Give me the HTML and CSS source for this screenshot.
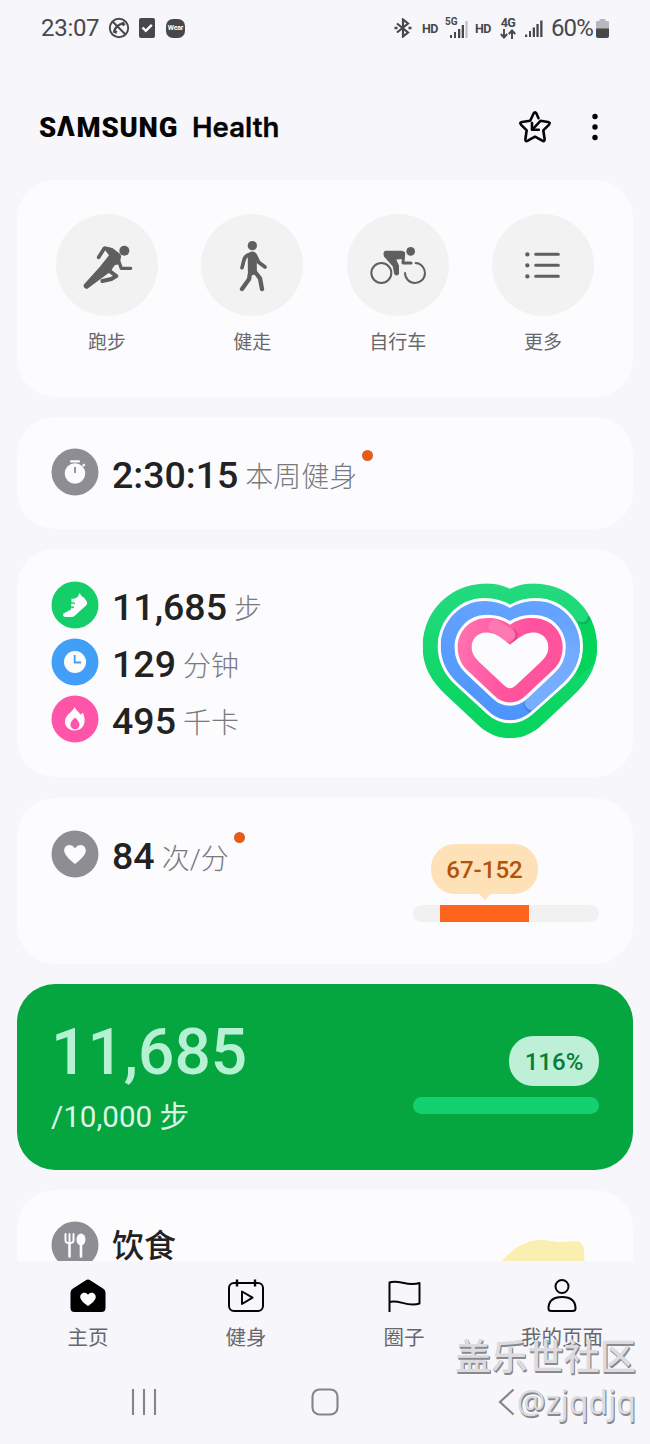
FILE: index.html
```html
<!DOCTYPE html>
<html lang="zh-CN">
<head>
<meta charset="utf-8">
<title>Samsung Health</title>
<link rel="stylesheet" href="styles.css">
</head>
<body>
<div class="screen">
  <div class="statusbar">
    <span class="clock">23:07</span>
    <svg class="st-call" width="22" height="22" viewBox="0 0 22 22" fill="none" stroke="#48484b" stroke-width="1.9"><circle cx="11" cy="11" r="9.2"/><path d="M4.500 4.500l13 13"/><path d="M6.300 15.500C6 11.500 10 7 15.500 6.300" stroke-width="2.300"/><path d="M14.300 5.300l2 3.200M5.500 13.800l3.300 1.800" stroke-width="3"/></svg>
    <svg class="st-check" width="16" height="20" viewBox="0 0 16 20"><rect width="16" height="20" rx="2" fill="#48484b"/><path d="M3.500 9.500l3.300 3.300 6-6" fill="none" stroke="#fff" stroke-width="2.400"/></svg>
    <span class="wear">Wear</span>
    <span class="grow"></span>
    <svg class="st-bt" width="18" height="20" viewBox="0 0 18 20" fill="none" stroke="#48484b" stroke-width="2.200"><path d="M3 5.500l11 9-5 4V1.500l5 4-11 9"/><path d="M.5 10h3M14.500 10h3" stroke-width="2.500"/></svg>
    <span class="hd hd-one">HD</span>
    <span class="cell cell-5g"><b class="gen">5G</b>
      <svg width="18" height="18" viewBox="0 0 18 18" fill="#48484b"><path d="M0 15h2v3H0zM4 12h2v6H4zM8 9h2.300v9H8zM11.700 5H14v13h-2.300z"/><path d="M15.500 1h2v17h-2z" fill="#bcbcc0"/></svg></span>
    <span class="hd hd-two">HD</span>
    <span class="gen4"><b>4G</b><svg width="16" height="10" viewBox="0 0 16 10" fill="none" stroke="#48484b" stroke-width="1.900"><path d="M4 0v8.500M.8 5L4 8.500 7.200 5M12 10V1.500M8.800 5L12 1.500 15.200 5"/></svg></span>
    <svg class="st-sig" width="18" height="18" viewBox="0 0 18 18" fill="#48484b"><path d="M0 15.500h2.200V18H0zM4 12h2v6H4zM7.700 8.500H10V18H7.700zM11.400 5h2.300v13h-2.300zM15.200 1.500h2.300V18h-2.300z"/></svg>
    <span class="pct">60%</span>
    <svg class="st-bat" width="13" height="19" viewBox="0 0 13 19"><path d="M3.500 0h6v2H12q1 0 1 1v7H0V3q0-1 1-1h2.500z" fill="#b9b9bd"/><path d="M0 9.500h13V17q0 2-2 2H2q-2 0-2-2z" fill="#48484b"/></svg>
  </div>

  <header class="header">
    <h1 class="brand"><span class="samsung">S<span class="open-a">A</span>MSUNG</span><span class="health">Health</span></h1>
    <svg class="star" width="34" height="34" viewBox="0 0 34 34" fill="none" stroke="#050505" stroke-width="2.600" stroke-linejoin="round" stroke-linecap="round"><path d="M20.500 8.200L18.400 3.500Q17 1 15.600 3.500L12.200 10.700 4 12Q1 12.500 3.200 14.800L8.700 20.300 7.400 29Q7.200 32 9.800 30.700L17 26.700 24.300 30.700Q26.800 32 26.600 29L25.300 20.300 30.800 14.800Q33 12.500 30 12L22.500 10.800 15 18.800"/><path d="M14 13v6.800h6.800"/></svg>
    <svg class="dots" width="8" height="28" viewBox="0 0 8 28"><circle cx="4" cy="3.500" r="2.700"/><circle cx="4" cy="14" r="2.700"/><circle cx="4" cy="24.500" r="2.700"/></svg>
  </header>

  <main class="cards">
    <section class="card quick">
      <div class="action"><span class="disc"><svg width="100" height="100" viewBox="0 0 300 300" fill="#5f5f61" stroke="#5f5f61" stroke-linecap="round" stroke-linejoin="round"><circle cx="202" cy="107" r="15" stroke="none"/><path d="M125 127L142 100 162 105" fill="none" stroke-width="11"/><path d="M143 94L166 99 189 116Q194 121 191 131L188 147 173 151 160 170 90 222Q78 219 80 209L128 156 156 121 146 108Z" stroke="none"/><path d="M185 138L193 160H221" fill="none" stroke-width="10"/><path d="M155 166L178 183 163 192 136 198" fill="none" stroke-width="12"/></svg></span><span class="label">跑步</span></div>
      <div class="action"><span class="disc"><svg width="100" height="100" viewBox="0 0 300 300" fill="none" stroke="#5f5f61" stroke-linecap="round" stroke-linejoin="round"><circle cx="151" cy="92" r="14" fill="#5f5f61" stroke="none"/><path d="M151 123V167" stroke-width="27"/><path d="M144 118Q128 121 125 139L120 158M160 121L170 142 189 156" stroke-width="11"/><path d="M145 170L141 193 120 222M157 168L174 190 180 222" stroke-width="13"/></svg></span><span class="label">健走</span></div>
      <div class="action"><span class="disc"><svg width="100" height="100" viewBox="0 0 300 300" fill="none" stroke="#5f5f61" stroke-linecap="round" stroke-linejoin="round"><circle cx="188" cy="109" r="13" fill="#5f5f61" stroke="none"/><circle cx="100" cy="174" r="30" stroke-width="6"/><path d="M203 144A30 30 0 1 1 171 174" stroke-width="6"/><path d="M167 115L165 144H189" stroke-width="9"/><path d="M113 109H160Q171 110 169 122L162 130 142 132 151 152V176Q147 182 141 177L136 153 110 124Q106 111 113 109Z" fill="#5f5f61" stroke-width="4"/></svg></span><span class="label">自行车</span></div>
      <div class="action"><span class="disc"><svg width="100" height="100" viewBox="0 0 300 300" fill="none" stroke="#5f5f61" stroke-linecap="round" stroke-width="9"><path d="M128 118H196M128 151H196M128 184H196"/><path d="M103 118h.1M103 151h.1M103 184h.1" stroke-width="13"/></svg></span><span class="label">更多</span></div>
    </section>

    <section class="card week">
      <div class="metric"><svg class="badge" width="48" height="48" viewBox="0 0 48 48"><circle cx="24" cy="24" r="23.500" fill="#8e8d93"/><g fill="#fcfcff"><circle cx="24" cy="25.500" r="10.300"/><rect x="19" y="12.200" width="10" height="2.300" rx="1"/><path d="M31 17l2-1.600 1.500 1.800-2 1.500z"/></g><path d="M24 19v6" stroke="#77767b" stroke-width="1.500"/></svg><strong>2:30:15</strong><span class="unit">本周健身</span><i class="dot"></i></div>
    </section>

    <section class="card activity">
      <div class="metrics">
        <div class="metric"><svg class="badge" width="48" height="48" viewBox="0 0 48 48"><circle cx="24" cy="24" r="23.500" fill="#13ce69"/><path d="M28.500 12Q31 16 33 16.500L36 21Q36.500 23 35 24.500L24 34.500Q22.500 36 20 36H14.400Q11 35.500 12.500 32.500L20 28.500 20.500 17.500Q24 18.500 27 15.500Z" fill="#fcfcff"/><path d="M19.500 21.500l4.500.8M19 25.800l4 .7" stroke="#13ce69" stroke-width="1.300"/></svg><strong>11,685</strong><span class="unit">步</span></div>
        <div class="metric"><svg class="badge" width="48" height="48" viewBox="0 0 48 48"><circle cx="24" cy="24" r="23.500" fill="#419ff8"/><circle cx="24" cy="24" r="11" fill="#fcfcff"/><path d="M23.700 17v7.500H30" fill="none" stroke="#419ff8" stroke-width="1.800"/></svg><strong>129</strong><span class="unit">分钟</span></div>
        <div class="metric"><svg class="badge" width="48" height="48" viewBox="0 0 48 48"><circle cx="24" cy="24" r="23.500" fill="#ff55a8"/><path d="M23.500 12c1.500 4 4.500 4 5.500 7.500 1.500-.2 2-1.200 3-1.700C36 27 32.500 35.500 24 35.500S11.500 28 15.500 21.500C18 18 22 16 23.500 12z" fill="#fcfcff"/><path d="M24 22.500c2.500 2.500 4.500 4.500 4.500 7.200a4.500 4.500 0 0 1-9 0c0-2.700 2-4.700 4.500-7.200z" fill="#ff55a8"/></svg><strong>495</strong><span class="unit">千卡</span></div>
      </div>
      <svg class="rings" width="176" height="156" viewBox="66 43 528 468">
        <defs>
          <linearGradient id="g" x1="0" y1="0" x2="0" y2="1"><stop offset="0" stop-color="#24da80"/><stop offset="1" stop-color="#05d45b"/></linearGradient>
          <linearGradient id="b" x1="0" y1="0" x2="0" y2="1"><stop offset="0" stop-color="#65a3ff"/><stop offset="1" stop-color="#4b94fb"/></linearGradient>
          <linearGradient id="bl" gradientUnits="userSpaceOnUse" x1="440" y1="110" x2="440" y2="400"><stop offset="0" stop-color="#72aaff" stop-opacity="0"/><stop offset=".45" stop-color="#72aaff"/><stop offset="1" stop-color="#78aeff"/></linearGradient>
          <linearGradient id="p" x1="0" y1="0" x2="1" y2=".25"><stop offset="0" stop-color="#ff74b1"/><stop offset=".65" stop-color="#ff539e"/></linearGradient>
          <clipPath id="gc"><path d="M330 60C290 40 240 40 195 55C120 80 68 150 68 235C68 300 100 345 150 390L240 474C295 520 365 520 420 474L510 390C560 345 591 300 591 235C591 150 540 80 465 55C420 40 370 40 330 60Z"/></clipPath>
          <clipPath id="bc"><path d="M330 118C295 97 260 93 225 100C165 115 122 170 122 232C122 275 140 312 172 342L268 430C305 463 355 463 392 430L490 342C522 312 540 275 540 232C540 170 497 115 437 100C400 93 365 97 330 118Z"/></clipPath>
        </defs>
        <g clip-path="url(#gc)"><path fill="url(#g)" d="M60 40h540v480H60z"/><path d="M525 152Q554 181 575 140L600 150V270L530 330Z" fill="#05d45b"/><path d="M535 158Q563 172 568 143" fill="none" stroke="#07994e" stroke-width="8" opacity=".55"/><path d="M510 110L545 144" stroke="#20d97a" stroke-width="33" stroke-linecap="round"/></g>
        <path d="M330 118C295 97 260 93 225 100C165 115 122 170 122 232C122 275 140 312 172 342L268 430C305 463 355 463 392 430L490 342C522 312 540 275 540 232C540 170 497 115 437 100C400 93 365 97 330 118Z" fill="url(#b)" stroke="#fcfcff" stroke-width="18"/>
        <g clip-path="url(#bc)"><path fill="url(#b)" d="M110 80h440v390H110z"/><path d="M378 399Q368 415 393 430" fill="none" stroke="#3170ce" stroke-width="9" opacity=".5"/><path d="M440 120C545 155 535 275 475 324L397 402" fill="none" stroke="url(#bl)" stroke-width="46" stroke-linecap="round"/></g>
        <path d="M330 168C300 148 270 145 240 150C200 160 173 195 173 235C173 265 185 290 205 308L285 383C310 408 350 408 375 383L455 308C476 290 488 265 488 235C488 195 462 160 420 150C390 145 360 148 330 168Z" fill="url(#p)" stroke="#fcfcff" stroke-width="19" paint-order="stroke"/>
        <path d="M337 185Q355 200 337 220" fill="none" stroke="#c73a7c" stroke-width="15" opacity=".55"/><path d="M285 173L326 199" stroke="#ff78b1" stroke-width="40" stroke-linecap="round"/>
        <path fill="#fcfcff" d="M330 228C315 217 302 205 285 197C245 180 215 203 215 235C215 253 223 266 240 282L312 350C325 362 335 362 348 350L420 282C438 266 445 253 445 235C445 203 415 180 375 197C358 205 345 217 330 228Z"/>
      </svg>
    </section>

    <section class="card heart">
      <div class="metric"><svg class="badge" width="48" height="48" viewBox="0 0 48 48"><circle cx="24" cy="24" r="23.500" fill="#8e8d93"/><path d="M24 18.300C20 12 11.500 15 13.500 22.500Q15 27 24 34q9-7 10.500-11.500C36.500 15 28 12 24 18.300z" fill="#fcfcff"/></svg><strong>84</strong><span class="unit">次/分</span><i class="dot"></i></div>
      <div class="range"><span class="bubble">67-152</span><div class="track"><span class="fill"></span></div></div>
    </section>

    <section class="card goal">
      <div class="steps"><span class="count">11,685</span><span class="target">/10,000 步</span></div>
      <div class="progress"><span class="pill">116%</span><span class="full"></span></div>
    </section>

    <section class="card food">
      <div class="metric"><svg class="badge" width="48" height="48" viewBox="0 0 48 48"><circle cx="24" cy="24" r="23.500" fill="#8e8d93"/><g fill="none" stroke="#fcfcff" stroke-linecap="round"><path d="M14.500 13v6.500q0 2.500 4 2.500t4-2.500V13M18.500 13v8" stroke-width="2"/><path d="M18.500 22v13.500M30 23v12.500" stroke-width="2.600"/></g><ellipse cx="30" cy="18.500" rx="4.500" ry="6" fill="#fcfcff"/></svg><strong class="cn">饮食</strong></div>
      <svg class="banana" width="84" height="24" viewBox="0 0 84 24"><path d="M0 24C12 10 25 1 43 2q12 2 19 2 8-1 15-1 8 3 6 21z" fill="#fbeeb1"/></svg>
    </section>
  </main>

  <nav class="tabs">
    <a class="tab"><svg width="40" height="36" viewBox="0 0 40 36"><path d="M17.500 2.500q2.500-2 5 0L35 10.500q2.500 1.500 2.500 4V30q0 4-4 4h-27q-4 0-4-4V14.500q0-2.500 2.500-4z"/><path d="M20 16.800C16.500 12.500 11 16 12.500 20.500Q14 24 20 28q6-4 7.500-7.500C29 16 23.500 12.500 20 16.800z" fill="#fff"/></svg><span>主页</span></a>
    <a class="tab"><svg width="40" height="36" viewBox="0 0 40 36" fill="none" stroke="#050505" stroke-width="2"><rect x="3" y="5" width="34" height="28" rx="5"/><path d="M11 1.500v7M29 1.500v7" stroke-width="2.400"/><path d="M16 13.500V26l10.500-6.300z" stroke-linejoin="round"/></svg><span>健身</span></a>
    <a class="tab"><svg width="40" height="36" viewBox="0 0 40 36" fill="none" stroke="#050505" stroke-width="2" stroke-linejoin="round"><path d="M5.500 34V4.500C15 1 23 9 35.500 5v20.500C23 29.500 15 21 5.500 24"/></svg><span>圈子</span></a>
    <a class="tab"><svg width="40" height="36" viewBox="0 0 40 36" fill="none" stroke="#050505" stroke-width="2"><circle cx="20" cy="8.500" r="6.500"/><path d="M6.500 30.500C6.500 22 12 19 20 19s13.500 3 13.500 11.500q0 2.500-3 2.500h-21q-3 0-3-2.500z"/></svg><span>我的页面</span></a>
  </nav>

  <div class="sysnav">
    <svg width="28" height="28" viewBox="0 0 28 28" stroke="#858589" stroke-width="2.100"><path d="M3 1v26M14 1v26M25 1v26"/></svg>
    <svg width="28" height="28" viewBox="0 0 28 28" fill="none" stroke="#858589" stroke-width="2.100"><rect x="1.500" y="1.500" width="25" height="25" rx="7"/></svg>
    <svg width="28" height="28" viewBox="0 0 28 28" fill="none" stroke="#858589" stroke-width="2.100"><path d="M21.500 1.500L8 14l13.500 12.500"/></svg>
  </div>

  <div class="watermark"><span class="forum">盖乐世社区</span><span class="user">@zjqdjq</span></div>
</div>
</body>
</html>
```
FILE: styles.css
```css
* { box-sizing: border-box; }
body { margin: 0; background: #f6f6fb; font-family: Roboto, "Noto Sans CJK SC", sans-serif; color: #222; }
svg { display: block; flex: none; }
.screen { position: relative; width: 650px; height: 1444px; overflow: hidden; display: flex; flex-direction: column; }

.statusbar { height: 56px; flex: none; display: flex; align-items: center; padding-left: 41px; padding-right: 41px; color: #48484b; }
.clock { font-size: 24px; width: 67px; white-space: nowrap; letter-spacing: -.3px; }
.st-check { margin-left: 9px; }
.wear { margin-left: 11px; width: 19px; height: 19px; border-radius: 7px; background: #48484b; color: #fff; font-size: 7px; font-weight: 700; line-height: 19px; display: flex; justify-content: center; letter-spacing: -.2px; }
.grow { flex: 1; }
.hd { font-size: 12.5px; font-weight: 700; letter-spacing: -.5px; width: 16px; white-space: nowrap; }
.hd-one { margin-left: 10px; }
.hd-two { margin-left: 7px; }
.cell { width: 22px; height: 20px; margin-left: 8px; position: relative; display: flex; justify-content: flex-end; align-items: flex-end; }
.gen { position: absolute; left: -1px; top: -1px; font-size: 10px; line-height: 10px; }
.gen4 { width: 16px; margin-left: 9px; display: flex; flex-direction: column; align-items: center; }
.gen4 b { font-size: 12.5px; line-height: 11px; margin-bottom: 1px; letter-spacing: -.5px; }
.st-sig { margin-left: 9px; }
.pct { font-size: 24px; margin-left: 8px; width: 44px; white-space: nowrap; letter-spacing: -.9px; }
.st-bat { margin-left: 1px; }

.header { height: 124px; flex: none; display: flex; align-items: center; padding: 17px 51px 0 39px; }
.brand { margin: 0; flex: 1; display: flex; align-items: baseline; color: #050505; padding-top: 2px; }
.samsung { font: 900 27.5px/32px Roboto, sans-serif; letter-spacing: .8px; width: 153px; white-space: nowrap; }
.open-a { position: relative; color: transparent; }
.open-a::before { content: "Λ"; position: absolute; left: 0; top: 0; font: 900 27.5px/32px Roboto, sans-serif; color: #050505; }
.health { font: 600 27.6px/32px Inter, sans-serif; white-space: nowrap; -webkit-text-stroke: .3px #050505; }
.dots { margin-left: 39px; }

.cards { height: 1081px; flex: none; overflow: hidden; padding: 0 17px; display: flex; flex-direction: column; gap: 20.200px; }
.card { flex: none; border-radius: 38px; background: #fcfcff; display: flex; justify-content: space-between; padding-left: 34px; padding-right: 34px; }
.quick { height: 217px; padding: 34px 39px 0; }
.action { width: 102px; display: flex; flex-direction: column; align-items: center; gap: 13px; }
.disc { width: 102px; height: 102px; border-radius: 50%; background: #f2f2f2; display: flex; justify-content: center; align-items: center; }
.label { font-size: 19px; line-height: 28px; color: #68686c; white-space: nowrap; }
.week { height: 112px; padding-top: 31px; }
.metric { height: 48px; display: flex; align-items: center; white-space: nowrap; }
.metric strong { font-size: 37.500px; font-weight: 500; line-height: 48px; margin: 5px 0 0 13px; color: #222; }
.unit { font-size: 28px; font-weight: 300; line-height: 40px; color: #7a7a7e; margin: 12px 0 0 7px; }
.dot { width: 11px; height: 11px; border-radius: 50%; background: #e55b19; margin: -33px 0 0 5px; }
.activity { height: 228px; padding-top: 32px; }
.activity .metric strong { margin-top: 3px; }
.activity .unit { margin-top: 9px; }
.metrics { display: flex; flex-direction: column; gap: 9px; }
.rings { margin: 2px 1px 0 0; }
.heart { height: 166px; padding-top: 32px; }
.range { width: 186px; margin-top: 14px; }
.bubble { position: relative; display: block; width: 107px; height: 50px; margin-left: 18px; border-radius: 24px; background: #ffe1b7; color: #b35407; font-size: 24px; font-weight: 500; line-height: 52px; text-align: center; }
.bubble::after { content: ""; position: absolute; left: 47px; top: 49px; border: 7px solid transparent; border-top-color: #ffe1b7; }
.track { height: 17px; margin-top: 11px; border-radius: 9px; background: #f1f1f1; padding-left: 27px; }
.fill { display: block; height: 17px; width: 89px; background: #ff641c; }
.goal { height: 186px; background: #05a540; }
.steps { display: flex; flex-direction: column; padding-top: 36px; white-space: nowrap; }
.count { font-size: 64px; font-weight: 500; line-height: 66px; color: #b6f1d4; }
.target { font-size: 29.600px; line-height: 40px; margin-top: 11px; color: #dbf8e7; }
.progress { width: 186px; padding-top: 52px; display: flex; flex-direction: column; align-items: flex-end; gap: 11px; }
.pill { width: 90px; height: 50px; border-radius: 24px; background: #bdf0d7; color: #087d37; font-size: 24px; line-height: 52px; text-align: center; font-weight: 500; }
.full { width: 186px; height: 17px; border-radius: 9px; background: #13d16f; }
.food { height: 160px; padding-top: 31px; }
.metric .cn { font-size: 32px; margin-top: 3px; }
.banana { margin: 17px 14px 0 0; }

.tabs { height: 99px; flex: none; padding: 17px 9px 0; display: flex; }
.tab { width: 158.300px; display: flex; flex-direction: column; align-items: center; gap: 8px; font-size: 20.500px; line-height: 32px; color: #68686c; white-space: nowrap; }
.sysnav { flex: 1; display: flex; justify-content: space-between; padding: 28px 130px 0; }

.watermark { position: absolute; right: 14px; top: 1330px; display: flex; flex-direction: column; align-items: flex-end; color: #dcdce0; white-space: nowrap; text-shadow: 1px 1px 0 #8a8a8e, 1px 2px 0 #8a8a8e; }
.forum { font: 500 36.200px/48px "Noto Sans CJK SC", sans-serif; }
.user { font: 400 32px/48px "Noto Sans", sans-serif; }
```
